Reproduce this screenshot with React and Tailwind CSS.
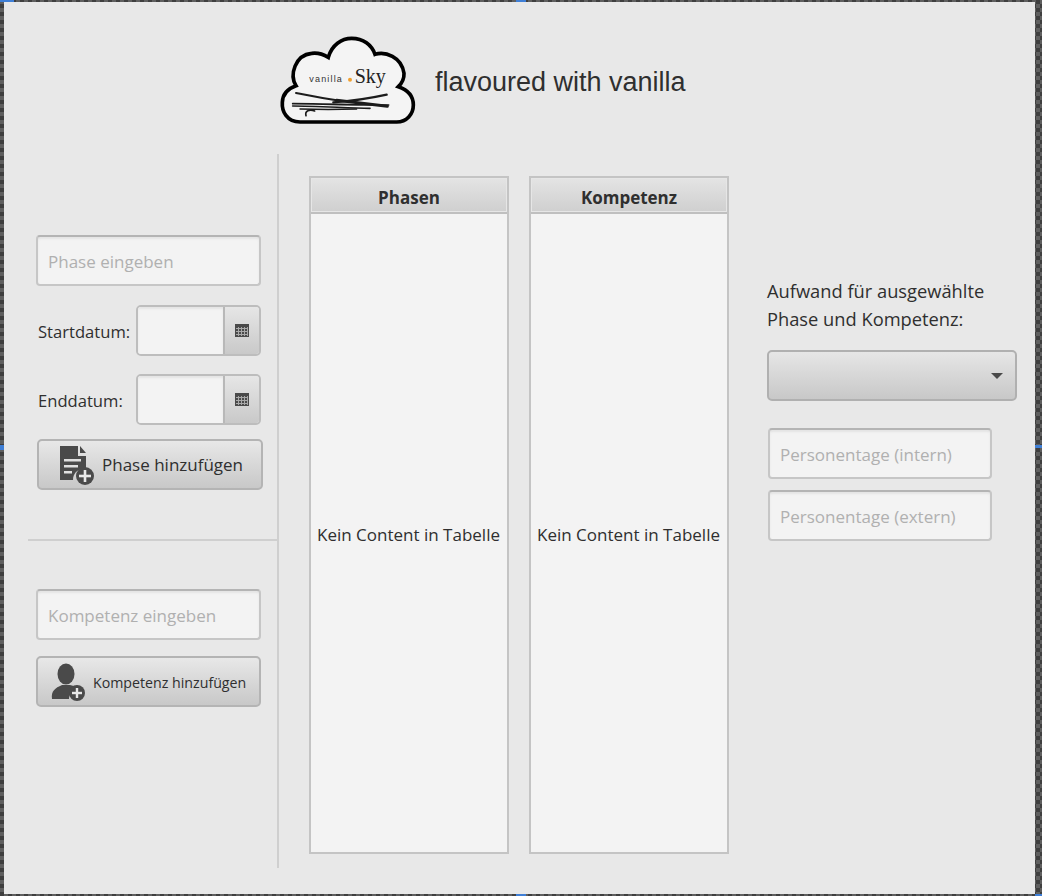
import React from 'react';

const UI_FONT = 'font-["Open_Sans",sans-serif]';

const TextBox = ({ placeholder, className = '' }) => (
  <div className={`h-[51px] flex items-center pl-[10px] pt-[2px] bg-[#f3f3f3] border-2 border-[#c6c6c6] border-t-[#b4b4b4] rounded-[4px] text-[17px] text-[#b0b0b0] shadow-[inset_0_2px_2px_#e4e4e4] ${className}`}>
    {placeholder}
  </div>
);

const CalendarIcon = () => (
  <svg width="14" height="13" viewBox="0 0 14 13">
    <rect x="0" y="0" width="14" height="13" fill="#4a4a4a" />
    <g fill="#a8a8a8">
      {[4, 7, 10].map((y) => <rect key={y} x="1" y={y} width="12" height="1" />)}
      {[3, 6, 9, 12].map((x) => <rect key={x} x={x} y="3" width="1" height="9" />)}
    </g>
  </svg>
);

const DateField = ({ label }) => (
  <div className="flex items-center h-[51px]">
    <span className="ml-[2px] pt-[3px] text-[16.6px] text-[#2f2f2f]">{label}</span>
    <div className="ml-auto w-[125px] h-[51px] flex border-2 border-[#bdbdbd] rounded-[5px] overflow-hidden">
      <div className="flex-1 bg-[#f3f3f3] shadow-[inset_0_2px_2px_#e4e4e4]" />
      <div className="w-[36px] flex items-center justify-center border-l-2 border-[#b8b8b8] bg-gradient-to-b from-[#e6e6e6] to-[#c9c9c9]">
        <CalendarIcon />
      </div>
    </div>
  </div>
);

const DocPlusIcon = () => (
  <svg width="36" height="40" viewBox="0 0 36 40">
    <path d="M1 1H19V11H27V24H24C18 24 14 29 14 35H1Z" fill="#4a4a4a" />
    <path d="M21 1L27 8H21Z" fill="#4a4a4a" />
    <g fill="#e0e0e0">
      <rect x="5" y="14" width="17" height="2.5" />
      <rect x="5" y="20" width="14" height="2.5" />
      <rect x="5" y="26" width="8" height="2.5" />
    </g>
    <circle cx="26" cy="31" r="9" fill="#4a4a4a" />
    <rect x="20" y="29.7" width="12" height="2.6" fill="#e8e8e8" />
    <rect x="24.7" y="25" width="2.6" height="12" fill="#e8e8e8" />
  </svg>
);

const UserPlusIcon = () => (
  <svg width="36" height="38" viewBox="0 0 36 38">
    <ellipse cx="15" cy="11" rx="8.5" ry="10.5" fill="#4a4a4a" />
    <path d="M1 36C0 28 4 25 11 22H19C23 23 26 24 28 26C22 27 18 31 18 36Z" fill="#4a4a4a" />
    <circle cx="26" cy="30" r="8" fill="#4a4a4a" />
    <rect x="21" y="28.8" width="10" height="2.4" fill="#e8e8e8" />
    <rect x="24.8" y="25" width="2.4" height="10" fill="#e8e8e8" />
  </svg>
);

const ActionButton = ({ icon, className = '', children }) => (
  <div className={`h-[51px] flex items-center border-2 border-[#b4b4b4] rounded-[5px] bg-gradient-to-b from-[#e8e8e8] to-[#c8c8c8] text-[#2f2f2f] ${className}`}>
    {icon}
    {children}
  </div>
);

const DataTable = ({ title }) => (
  <div className="w-[200px] h-[678px] flex flex-col border-2 border-[#c4c4c4] bg-[#f3f3f3]">
    <div className="h-[36px] flex items-center justify-center pt-[6px] border-b-2 border-[#bfbfbf] bg-gradient-to-b from-[#e4e4e4] to-[#cfcfcf] text-[17px] font-bold text-[#2f2f2f] shadow-[inset_0_0_0_1px_#e6e6e6]">
      {title}
    </div>
    <div className="flex-1 flex items-center justify-center pt-[3px] pr-[1px] text-[17px] text-[#2f2f2f] whitespace-nowrap">
      Kein Content in Tabelle
    </div>
  </div>
);

const CloudLogo = () => (
  <svg width="160" height="110" viewBox="0 0 480 330" className="block">
    <path
      d="M90 291C50 291 35 258 37 232C38 205 55 190 78 182C58 150 75 90 125 85C145 82 160 88 175 97C185 60 215 40 245 40C280 40 305 60 315 88C345 78 395 95 402 145C403 165 395 175 385 185C415 195 430 215 430 240C430 268 410 291 380 291Z"
      fill="#f4f4f4"
      stroke="#000"
      strokeWidth="11"
    />
    <text x="118" y="172" fontFamily="Liberation Sans, sans-serif" fontSize="27" letterSpacing="3.5" fill="#333">vanilla</text>
    <circle cx="240" cy="164" r="6" fill="#f0a030" />
    <text x="254" y="175" fontFamily="Liberation Serif, serif" fontSize="60" fill="#222">Sky</text>
    <g fill="none" stroke="#1c1c1c" strokeLinecap="round">
      <path d="M78 204C120 212 160 220 200 226" strokeWidth="6" />
      <path d="M200 226L352 244" strokeWidth="9" />
      <path d="M190 232C250 228 300 220 350 209" strokeWidth="7" />
      <path d="M68 236C130 236 220 240 356 240" strokeWidth="5" />
      <path d="M68 243C130 243 220 248 300 250" strokeWidth="5" />
      <path d="M90 252C150 254 200 254 260 252" strokeWidth="4" />
      <path d="M134 258C118 252 104 258 108 272" strokeWidth="5" />
    </g>
  </svg>
);

export default function App() {
  return (
    <div className={`relative w-[1042px] h-[896px] overflow-hidden pt-[2px] pl-[4px] bg-[repeating-conic-gradient(#3f3f3f_0_25%,#5f5f5f_0_50%)] bg-[length:8px_8px] ${UI_FONT}`}>
      {/* selection handles */}
      <div className="absolute left-0 top-0 w-[14px] h-[2px] bg-[#3f7fd6]" />
      <div className="absolute left-[516px] top-0 w-[10px] h-[2px] bg-[#3f7fd6]" />
      <div className="absolute left-0 top-[445px] w-[4px] h-[5px] bg-[#3f7fd6]" />
      <div className="absolute right-0 top-[445px] w-[7px] h-[3px] bg-[#3f7fd6]" />
      <div className="absolute left-[516px] bottom-0 w-[10px] h-[2px] bg-[#3f7fd6]" />
      <div className="absolute right-0 bottom-0 w-[7px] h-[2px] bg-[#3f7fd6]" />

      <div className="w-[1031px] h-[892px] bg-[#e8e8e8] flex flex-col">
        {/* Header */}
        <div className="h-[152px] flex pl-[266px] pt-[23px]">
          <CloudLogo />
          <h1 className='ml-[5px] mt-[40px] h-[34px] text-[27px] leading-[34px] text-[#2f2f2f] font-["Liberation_Sans",sans-serif] whitespace-nowrap'>
            flavoured with vanilla
          </h1>
        </div>

        {/* Body */}
        <div className="h-[714px] flex">
          <div className="w-[275px] border-r-2 border-[#cfcfcf] flex flex-col">
            <div className="h-[387px] ml-[24px] border-b-2 border-[#cfcfcf] pt-[81px] pl-[8px] pr-[16px]">
              <TextBox placeholder="Phase eingeben" className="w-[225px]" />
              <div className="w-[225px] mt-[19px] flex flex-col gap-[18px]">
                <DateField label="Startdatum:" />
                <DateField label="Enddatum:" />
              </div>
              <ActionButton
                className="w-[226px] mt-[14px] ml-[1px] pl-[20px] text-[17px]"
                icon={<DocPlusIcon />}
              >
                <span className="ml-[7px] whitespace-nowrap">Phase hinzufügen</span>
              </ActionButton>
            </div>
            <div className="ml-[32px] pt-[48px]">
              <TextBox placeholder="Kompetenz eingeben" className="w-[225px]" />
              <ActionButton
                className="w-[225px] mt-[16px] pl-[13px] text-[14.2px]"
                icon={<UserPlusIcon />}
              >
                <span className="ml-[6px] pt-[3px] whitespace-nowrap">Kompetenz hinzufügen</span>
              </ActionButton>
            </div>
          </div>

          {/* Tables */}
          <div className="flex gap-[20px] pt-[22px] pl-[30px]">
            <DataTable title="Phasen" />
            <DataTable title="Kompetenz" />
          </div>

          {/* Effort */}
          <div className="pl-[38px] pt-[123px]">
            <p className="text-[18.3px] leading-[28px] text-[#2f2f2f] whitespace-nowrap">
              Aufwand für ausgewählte
              <br />
              Phase und Kompetenz:
            </p>
            <div className="w-[250px] h-[51px] mt-[17px] flex items-center justify-end pr-[12px] border-2 border-[#b0b0b0] rounded-[5px] bg-gradient-to-b from-[#e6e6e6] to-[#c8c8c8]">
              <svg width="12" height="6" viewBox="0 0 12 6">
                <path d="M0 0H12L6 6Z" fill="#4a4a4a" />
              </svg>
            </div>
            <div className="w-[224px] ml-[1px] mt-[27px] flex flex-col gap-[11px]">
              <TextBox placeholder="Personentage (intern)" />
              <TextBox placeholder="Personentage (extern)" />
            </div>
          </div>
        </div>
      </div>
    </div>
  );
}
